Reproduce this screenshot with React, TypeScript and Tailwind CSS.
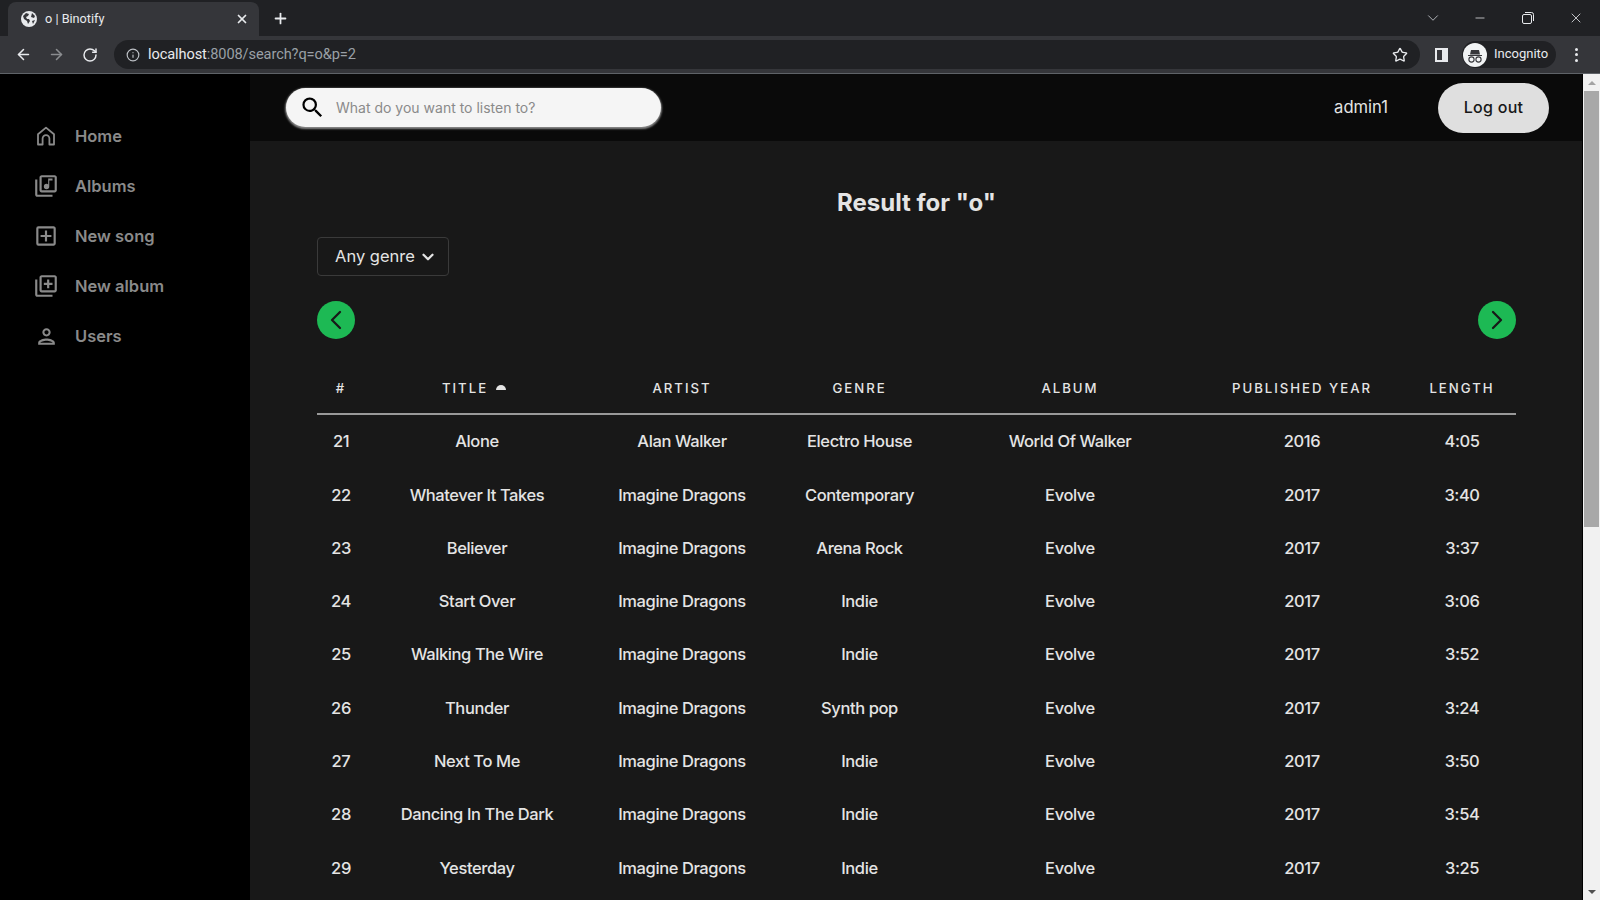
import React from 'react';
import { MdOutlineLibraryMusic, MdOutlineAddBox, MdOutlineLibraryAdd, MdOutlinePerson, MdSearch } from 'react-icons/md';
import { ChevronDown, ChevronLeft, ChevronRight, ArrowLeft, ArrowRight, RotateCw, Star, X, Plus, Minus, Info } from 'lucide-react';

const songs = [
  { id: 21, title: 'Alone', artist: 'Alan Walker', genre: 'Electro House', album: 'World Of Walker', year: 2016, length: '4:05' },
  { id: 22, title: 'Whatever It Takes', artist: 'Imagine Dragons', genre: 'Contemporary', album: 'Evolve', year: 2017, length: '3:40' },
  { id: 23, title: 'Believer', artist: 'Imagine Dragons', genre: 'Arena Rock', album: 'Evolve', year: 2017, length: '3:37' },
  { id: 24, title: 'Start Over', artist: 'Imagine Dragons', genre: 'Indie', album: 'Evolve', year: 2017, length: '3:06' },
  { id: 25, title: 'Walking The Wire', artist: 'Imagine Dragons', genre: 'Indie', album: 'Evolve', year: 2017, length: '3:52' },
  { id: 26, title: 'Thunder', artist: 'Imagine Dragons', genre: 'Synth pop', album: 'Evolve', year: 2017, length: '3:24' },
  { id: 27, title: 'Next To Me', artist: 'Imagine Dragons', genre: 'Indie', album: 'Evolve', year: 2017, length: '3:50' },
  { id: 28, title: 'Dancing In The Dark', artist: 'Imagine Dragons', genre: 'Indie', album: 'Evolve', year: 2017, length: '3:54' },
  { id: 29, title: 'Yesterday', artist: 'Imagine Dragons', genre: 'Indie', album: 'Evolve', year: 2017, length: '3:25' },
];

const cols = 'grid grid-cols-[48px_224px_186px_169px_252px_212px_108px]';

function HomeIcon() {
  return (
    <svg width="20" height="20" viewBox="0 0 20 20" fill="none" stroke="currentColor" strokeWidth="1.8">
      <path d="M2 18.5V8.2L10 1.6l8 6.6v10.3h-4.6v-6a3.4 3.4 0 0 0-6.8 0v6z" strokeLinejoin="round" />
    </svg>
  );
}

function Globe() {
  return (
    <svg width="16" height="16" viewBox="0 0 16 16">
      <circle cx="8" cy="8" r="8" fill="#e8eaed" />
      <path d="M2 5l3-3 3 1-1 2-2 1 1 2 2 0 1 2-2 3-1-3-3-2zM11 2l3 3-1 2-3-1zM11 10l3-1-2 4z" fill="#35363a" />
    </svg>
  );
}

function IncognitoIcon() {
  return (
    <svg width="24" height="24" viewBox="0 0 24 24">
      <circle cx="12" cy="12" r="12" fill="#f1f3f4" />
      <path d="M5 12h14v1H5zM8 7h8l1 4.5H7z" fill="#35363a" />
      <circle cx="8.5" cy="16.5" r="2.6" fill="none" stroke="#35363a" strokeWidth="1.1" />
      <circle cx="15.5" cy="16.5" r="2.6" fill="none" stroke="#35363a" strokeWidth="1.1" />
    </svg>
  );
}

function RestoreIcon() {
  return (
    <svg width="12" height="12" viewBox="0 0 12 12" fill="none" stroke="#e8eaed" strokeWidth="1">
      <rect x="0.5" y="2.5" width="9" height="9" rx="1.5" />
      <path d="M3 0.5h6.5a2 2 0 0 1 2 2V9" />
    </svg>
  );
}

function BrowserChrome() {
  return (
    <div className="shrink-0 font-['Roboto',sans-serif]">
      <div className="h-9 bg-[#202124] flex items-end pl-2 relative">
        <div className="w-[251px] h-[34px] bg-[#35363a] rounded-t-lg flex items-center pl-[13px] pr-[10px]">
          <Globe />
          <span className="ml-[8px] text-[12.7px] text-[#e8eaed] flex-1">o | Binotify</span>
          <X size={14} strokeWidth={3} className="text-[#e8eaed]" />
        </div>
        <Plus size={17} strokeWidth={2.5} className="text-[#e8eaed] ml-[13px] mb-[9px]" />
        <div className="ml-auto flex items-center text-[#e8eaed] h-9">
          <ChevronDown size={18} strokeWidth={1.2} className="mr-[31px] text-[#bdc1c6]" />
          <Minus size={14} strokeWidth={1.3} className="mr-[35px]" />
          <div className="mr-[34px]"><RestoreIcon /></div>
          <X size={16} strokeWidth={1.2} className="mr-[16px]" />
        </div>
      </div>
      <div className="h-[38px] bg-[#35363a] flex items-center pl-[15px] border-b border-[#5f6368]">
        <ArrowLeft size={17} strokeWidth={2.2} className="text-[#e8eaed]" />
        <ArrowRight size={17} strokeWidth={2.2} className="text-[#8b8d90] ml-[16px]" />
        <RotateCw size={16} strokeWidth={2.2} className="text-[#e8eaed] ml-[17px]" />
        <div className="ml-[16px] w-[1306px] h-[29px] rounded-full bg-[#202124] flex items-center pl-[12px] pr-[12px]">
          <Info size={14} className="text-[#bdc1c6]" />
          <span className="ml-[8px] text-[14.6px] tracking-[-0.1px] text-[#e8eaed]">localhost<span className="text-[#9aa0a6]">:8008/search?q=o&amp;p=2</span></span>
          <Star size={16} strokeWidth={2} className="ml-auto text-[#e8eaed]" />
        </div>
        <div className="ml-[15px] w-[13px] h-[14px] border-2 border-[#e8eaed] border-r-[6px]" />
        <div className="ml-[14px] w-[94px] h-[27px] rounded-full bg-[#202124] flex items-center pl-[1px]">
          <IncognitoIcon />
          <span className="ml-[7px] mb-[1px] text-[13px] text-[#e8eaed]">Incognito</span>
        </div>
        <div className="ml-[19px] flex flex-col gap-[2.5px]">
          <span className="w-[3px] h-[3px] rounded-full bg-[#e8eaed]" />
          <span className="w-[3px] h-[3px] rounded-full bg-[#e8eaed]" />
          <span className="w-[3px] h-[3px] rounded-full bg-[#e8eaed]" />
        </div>
      </div>
    </div>
  );
}

function Sidebar() {
  const items = [
    { label: 'Home', icon: <HomeIcon /> },
    { label: 'Albums', icon: <MdOutlineLibraryMusic size={26} /> },
    { label: 'New song', icon: <MdOutlineAddBox size={26} /> },
    { label: 'New album', icon: <MdOutlineLibraryAdd size={26} /> },
    { label: 'Users', icon: <MdOutlinePerson size={25} /> },
  ];
  return (
    <aside className="w-[250px] shrink-0 bg-black pt-[37px] pl-[33px]">
      {items.map((item) => (
        <div key={item.label} className="h-[50px] flex items-center text-[#8a8a8a]">
          <span className="w-[26px] flex justify-center">{item.icon}</span>
          <span className="ml-[16px] text-[16.5px] font-semibold">{item.label}</span>
        </div>
      ))}
    </aside>
  );
}

function Navbar() {
  return (
    <header className="h-[67px] shrink-0 bg-[#0a0a0a] flex items-center pl-[35px] pr-[33px]">
      <div className="ml-[1px] w-[375px] h-[39px] rounded-full bg-[#f5f5f5] shadow-[0_1px_2px_1px_#888] flex items-center pl-[13px]">
        <MdSearch size={27} className="text-black" />
        <span className="ml-[10px] mb-[1px] text-[14px] text-[#8a8a8a]">What do you want to listen to?</span>
      </div>
      <span className="ml-auto text-[16.6px] text-[#e4e4e4]">admin1</span>
      <button className="ml-[50px] w-[111px] h-[50px] pb-[2px] rounded-full bg-[#dfdfdf] text-[#181818] text-[16px] font-medium tracking-[0.3px]">Log out</button>
    </header>
  );
}

export default function App() {
  return (
    <div className="h-screen overflow-hidden flex flex-col font-['Inter',sans-serif]">
      <BrowserChrome />
      <div className="flex-1 flex min-h-0">
        <Sidebar />
        <div className="flex-1 flex flex-col min-w-0 bg-[#181818]">
          <Navbar />
          <main className="flex-1 pl-[67px] pr-[66px] overflow-hidden">
            <h1 className="mt-[46px] text-center text-[24px] leading-[32px] font-bold text-[#e4e4e4]">Result for "o"</h1>
            <button className="mt-[18px] block w-[132px] h-[39px] rounded border border-[#3a3a3a] text-[#e4e4e4] text-[16.5px] pl-[17px]">
              <span className="flex items-center gap-[4px]">Any genre <ChevronDown size={18} strokeWidth={3} /></span>
            </button>
            <div className="mt-[25px] flex justify-between">
              <button className="w-[38px] h-[38px] rounded-full bg-[#1db954] flex items-center justify-center text-[#181818]"><ChevronLeft size={32} strokeWidth={1.7} /></button>
              <button className="w-[38px] h-[38px] rounded-full bg-[#1db954] flex items-center justify-center text-[#181818]"><ChevronRight size={32} strokeWidth={1.7} /></button>
            </div>
            <div className={`${cols} mt-[25px] h-[51px] items-center text-center border-b-2 border-[#999999] text-[#e4e4e4] text-[13.2px] font-medium tracking-[0.15em]`}>
              <span>#</span>
              <span className="flex items-center justify-center gap-[8px] pr-[6px]">TITLE
                <svg width="10" height="5" viewBox="0 0 10 5" className="mb-[2px]"><path d="M0 5a5 5 0 0 1 10 0z" fill="#e4e4e4" /></svg>
              </span>
              <span>ARTIST</span>
              <span>GENRE</span>
              <span>ALBUM</span>
              <span>PUBLISHED YEAR</span>
              <span>LENGTH</span>
            </div>
            {songs.map((s) => (
              <div key={s.id} className={`${cols} h-[53.3px] items-center text-center text-[#e4e4e4] text-[16.5px] font-medium tracking-[-0.4px]`}>
                <span>{s.id}</span>
                <span>{s.title}</span>
                <span>{s.artist}</span>
                <span>{s.genre}</span>
                <span>{s.album}</span>
                <span>{s.year}</span>
                <span>{s.length}</span>
              </div>
            ))}
          </main>
        </div>
        <div className="w-[18px] shrink-0 bg-[#f1f1f1] border-l border-black flex flex-col">
          <div className="h-[17px] flex items-center justify-center">
            <div className="w-0 h-0 border-x-[4px] border-x-transparent border-b-[4px] border-b-[#a3a3a3]" />
          </div>
          <div className="mx-[1px] h-[436px] bg-[#a8a8a8]" />
          <div className="mt-auto h-[17px] flex items-center justify-center">
            <div className="w-0 h-0 border-x-[4px] border-x-transparent border-t-[4px] border-t-[#505050]" />
          </div>
        </div>
      </div>
    </div>
  );
}
